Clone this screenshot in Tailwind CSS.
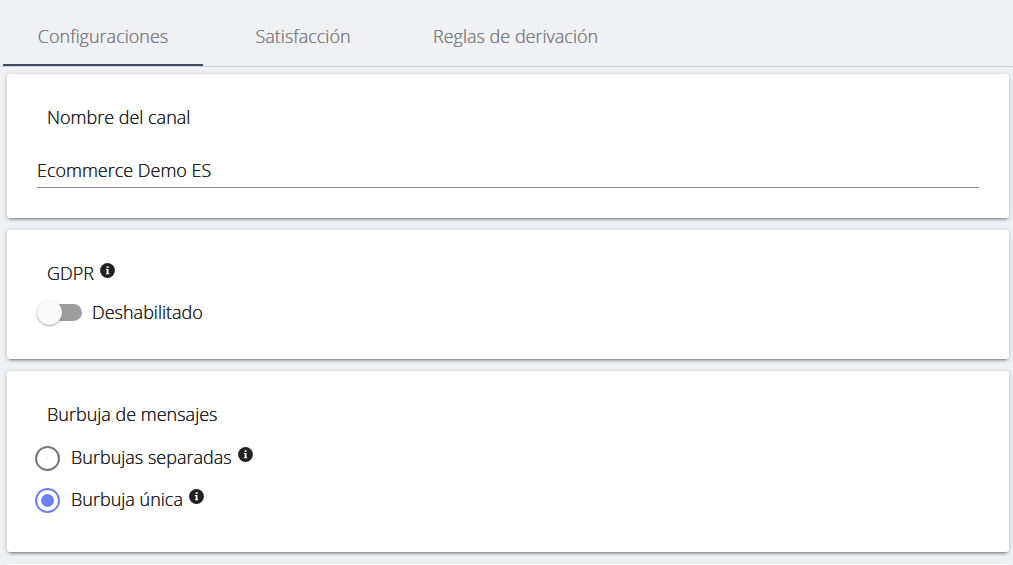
<!DOCTYPE html>
<html lang="es">
<head>
  <meta charset="UTF-8" />
  <meta name="viewport" content="width=device-width, initial-scale=1.0" />
  <title>Configuraciones</title>
  <script src="https://cdn.jsdelivr.net/npm/@tailwindcss/browser@4"></script>
</head>
<body class="flex flex-col h-screen overflow-hidden bg-[#f0f1f5] font-['Open_Sans',sans-serif] text-lg leading-6 font-light text-[#212121] [text-shadow:0_0_0_currentColor]">
  <svg class="hidden">
    <symbol id="info" viewBox="0 0 15 15">
      <circle cx="7.5" cy="7.5" r="7.4" fill="#212121" />
      <path d="M6.7 3.2h1.8v1.7H6.7zM5.9 6h2.6v4.2h.7v1H5.9v-1h.8V7h-.8z" fill="#fff" />
    </symbol>
  </svg>

  <nav class="flex pl-[3px] border-b border-[#d0d1d6] text-[#7c7c7e]">
    <button type="button" class="min-w-[200px] h-[66px] px-[30px] pt-2 border-b-2 border-[#3f4d63] [text-shadow:0_0_0_currentColor]">Configuraciones</button>
    <button type="button" class="min-w-[200px] h-[66px] px-[30px] pt-2 border-b-2 border-transparent [text-shadow:0_0_0_currentColor]">Satisfacción</button>
    <button type="button" class="min-w-[200px] h-[66px] px-[30px] pt-2 border-b-2 border-transparent [text-shadow:0_0_0_currentColor]">Reglas de derivación</button>
  </nav>

  <main class="flex-1 min-h-0 flex flex-col gap-3 pt-[7px] pl-[7px] pr-1">
    <section class="shrink-0 bg-white rounded-[3px] px-[30px] pt-[31px] pb-[30px] shadow-[0_3px_3px_-2px_rgba(0,0,0,0.4),0_1px_5px_rgba(0,0,0,0.22)]">
      <label for="channel" class="block pl-[10px]">Nombre del canal</label>
      <input type="text" id="channel" value="Ecommerce Demo ES" class="block w-full mt-7 h-[31px] pb-1 border-b border-[#8c8d8d] outline-none [text-shadow:0_0_0_currentColor]" />
    </section>

    <section class="shrink-0 bg-white rounded-[3px] px-[30px] pt-[31px] pb-[34px] shadow-[0_3px_3px_-2px_rgba(0,0,0,0.4),0_1px_5px_rgba(0,0,0,0.22)]">
      <h2 class="flex gap-[6px] pl-[10px]">GDPR <svg class="size-[15px] mt-[2px]"><use href="#info" /></svg></h2>
      <label class="flex items-center gap-[10px] mt-[14px] h-[26px]">
        <input type="checkbox" role="switch" class="appearance-none flex items-center w-[45px] h-[17px] bg-[#9e9e9e] rounded-full before:size-[25px] before:shrink-0 before:rounded-full before:bg-[#fafafa] before:shadow-[0_1px_2px_rgba(0,0,0,0.35)]" />
        Deshabilitado
      </label>
    </section>

    <section class="shrink-0 bg-white rounded-[3px] pl-7 pr-[30px] pt-[31px] pb-[39px] shadow-[0_3px_3px_-2px_rgba(0,0,0,0.4),0_1px_5px_rgba(0,0,0,0.22)]">
      <h2 class="pl-3">Burbuja de mensajes</h2>
      <div class="flex flex-col gap-4 mt-[19px]">
        <label class="flex gap-[6px] h-[26px]">
          <input type="radio" name="bubble" class="appearance-none size-[25px] mt-px mr-[5px] grid place-items-center border-2 border-[#757575] rounded-full before:size-px before:bg-[#c4ccfd]" />
          Burbujas separadas <svg class="size-[15px] mt-[2px]"><use href="#info" /></svg>
        </label>
        <label class="flex gap-[6px] h-[26px]">
          <input type="radio" name="bubble" checked class="appearance-none size-[25px] mt-px mr-[5px] grid place-items-center border-2 border-[#6c80fa] rounded-full before:size-[13px] before:rounded-full before:bg-[#6c80fa]" />
          Burbuja única <svg class="size-[15px] mt-[2px]"><use href="#info" /></svg>
        </label>
      </div>
    </section>

    <section class="flex-1 bg-white rounded-t-[3px] shadow-[0_3px_3px_-2px_rgba(0,0,0,0.4),0_1px_5px_rgba(0,0,0,0.22)]"></section>
  </main>
</body>
</html>
